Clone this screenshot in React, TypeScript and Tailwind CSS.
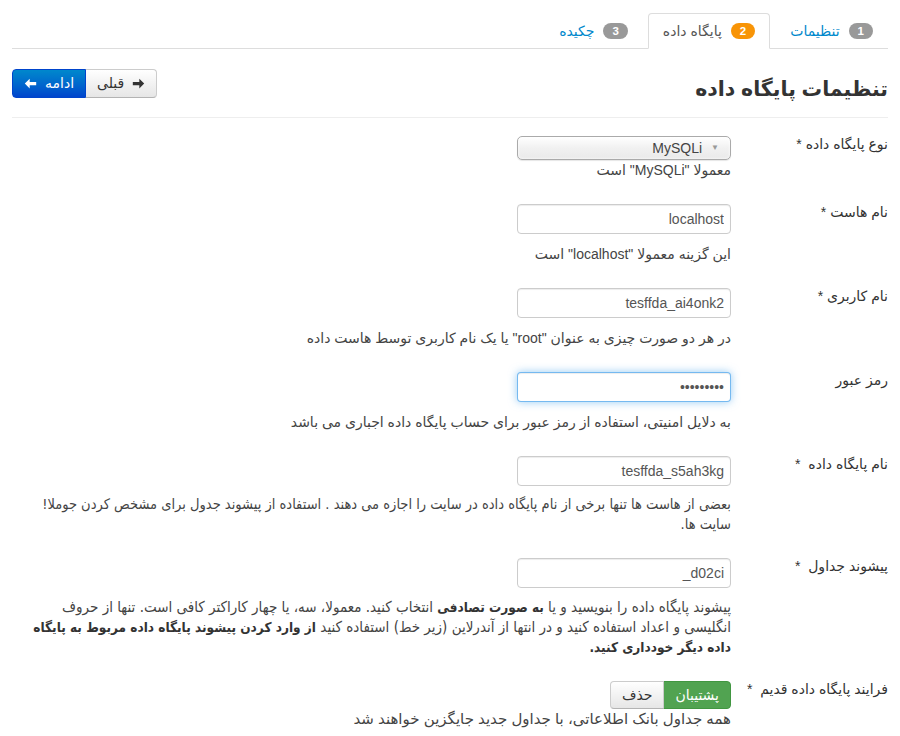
import type React from 'react'

const FONT = "font-['Liberation_Sans','DejaVu_Sans',sans-serif]"
const CONDENSED = "font-['DejaVu_Sans_Condensed','DejaVu_Sans',sans-serif]"

const ArrowRight = ({ className }: { className?: string }) => (
  <svg viewBox="0 0 16 16" className={className} fill="currentColor">
    <path d="M1 6h8V2l6 6-6 6v-4H1z" />
  </svg>
)

const ArrowLeft = ({ className }: { className?: string }) => (
  <svg viewBox="0 0 16 16" className={className} fill="currentColor">
    <path d="M15 6H7V2L1 8l6 6v-4h8z" />
  </svg>
)

type TabProps = { num: string; label: string; active?: boolean }

const Tab: React.FC<TabProps> = ({ num, label, active }) => (
  <li className="-mb-px ml-[5px]">
    <div
      className={`flex items-center gap-[9px] px-[14px] py-[7px] leading-5 rounded-t-[4px] border ${
        active ? 'bg-white border-[#ddd] border-b-transparent text-[#555]' : 'border-transparent text-[#08c]'
      }`}
    >
      <span
        className={`rounded-[9px] px-[9px] py-[1px] text-[11.5px] leading-[14px] font-bold text-white ${
          active ? 'bg-[#f89406]' : 'bg-[#999]'
        }`}
      >
        {num}
      </span>
      <span>{label}</span>
    </div>
  </li>
)

const TextInput = ({ value, focused, password }: { value: string; focused?: boolean; password?: boolean }) => (
  <input
    type={password ? 'password' : 'text'}
    dir="ltr"
    readOnly
    defaultValue={value}
    className={`block w-[214px] h-[30px] rounded-[4px] border bg-white px-[6px] text-right text-[14px] text-[#555] outline-none ${FONT} ${
      focused
        ? 'border-[rgba(82,168,236,0.8)] shadow-[inset_0_1px_1px_rgba(0,0,0,0.075),0_0_8px_rgba(82,168,236,0.6)]'
        : 'border-[#ccc] shadow-[inset_0_1px_1px_rgba(0,0,0,0.075)]'
    }`}
  />
)

type RowProps = {
  label: string
  children: React.ReactNode
  help: React.ReactNode
  helpClass?: string
}

const Row: React.FC<RowProps> = ({ label, children, help, helpClass = 'mt-[10px]' }) => (
  <div className="flex mb-6">
    <label className="w-[157px] shrink-0 -mt-[2px] leading-5 text-[#333] whitespace-pre">{label}</label>
    <div className="flex-1">
      {children}
      <p className={`leading-5 text-[#444] ${helpClass}`}>{help}</p>
    </div>
  </div>
)

export default function App() {
  return (
    <div dir="rtl" className={`w-[900px] min-h-[736px] bg-white px-3 pt-[13px] text-[14px] text-[#333] ${FONT}`}>
      {/* مراحل نصب */}
      <ul className="flex border-b border-[#ddd]">
        <Tab num="1" label="تنظیمات" />
        <Tab num="2" label="پایگاه داده" active />
        <Tab num="3" label="چکیده" />
      </ul>

      {/* عنوان و دکمه ها */}
      <div className="flex items-start justify-between mt-5">
        <h1 className="text-[20.5px] leading-[40px] font-bold text-[#333]">تنظیمات پایگاه داده</h1>
        <div className="flex">
          <button
            type="button"
            className="flex items-center gap-[8px] h-[29px] px-[11px] border border-[#ccc] border-b-[#b3b3b3] rounded-r-[4px] bg-gradient-to-b from-white to-[#e6e6e6] text-[#333]"
          >
            <ArrowRight className="w-[13px] h-[13px]" />
            <span>قبلی</span>
          </button>
          <button
            type="button"
            className="flex items-center gap-[8px] h-[29px] px-[11px] -mr-px border border-[#04c] rounded-l-[4px] bg-gradient-to-b from-[#08c] to-[#04c] text-white"
          >
            <span>ادامه</span>
            <ArrowLeft className="w-[13px] h-[13px]" />
          </button>
        </div>
      </div>
      <div className="mt-[8px] border-t border-[#eee] border-b border-b-white" />

      {/* فرم */}
      <div className="mt-[17px]">
        <Row label="نوع پایگاه داده *" help={'معمولا "MySQLi" است'} helpClass="">
          <div className="flex items-center gap-[9px] w-[214px] h-[24px] rounded-[5px] border border-[#aaa] bg-gradient-to-b from-white via-[#f1f1f1] to-[#eaeaea] shadow-[inset_0_0_3px_white,0_1px_1px_rgba(0,0,0,0.1)] pr-[11px] text-[14px] text-[#444]">
            <span className="text-[8px] text-[#999]">▼</span>
            <span>MySQLi</span>
          </div>
        </Row>
        <Row label="نام هاست *" help={'این گزینه معمولا "localhost" است'}>
          <TextInput value="localhost" />
        </Row>
        <Row label="نام کاربری *" help={'در هر دو صورت چیزی به عنوان "root" یا یک نام کاربری توسط هاست داده'}>
          <TextInput value="tesffda_ai4onk2" />
        </Row>
        <Row label="رمز عبور" help="به دلایل امنیتی، استفاده از رمز عبور برای حساب پایگاه داده اجباری می باشد">
          <TextInput value="123456789" focused password />
        </Row>
        <Row
          label="نام پایگاه داده  *"
          helpClass={`mt-[8px] text-[14.5px] ${CONDENSED}`}
          help="بعضی از هاست ها تنها برخی از نام پایگاه داده در سایت را اجازه می دهند . استفاده از پیشوند جدول برای مشخص کردن جوملا! سایت ها."
        >
          <TextInput value="tesffda_s5ah3kg" />
        </Row>
        <Row
          label="پیشوند جداول  *"
          helpClass={`mt-[9px] text-[15px] ${CONDENSED}`}
          help={
            <>
              پیشوند پایگاه داده را بنویسید و یا <b className="text-[#333] text-[13.5px]">به صورت تصادفی</b> انتخاب کنید. معمولا، سه، یا چهار
              کاراکتر کافی است. تنها از حروف انگلیسی و اعداد استفاده کنید و در انتها از آندرلاین (زیر خط) استفاده کنید{' '}
              <b className="text-[#333] text-[13.5px]">از وارد کردن پیشوند پایگاه داده مربوط به پایگاه داده دیگر خودداری کنید.</b>
            </>
          }
        >
          <TextInput value="_d02ci" />
        </Row>
        <Row
          label="فرایند پایگاه داده قدیم  *"
          help="همه جداول بانک اطلاعاتی، با جداول جدید جایگزین خواهند شد"
          helpClass="text-[15px]"
        >
          <div className="flex">
            <button
              type="button"
              className="h-[28px] px-[11px] rounded-r-[4px] border border-[#419641] bg-[#51a351] text-white"
            >
              پشتیبان
            </button>
            <button
              type="button"
              className="h-[28px] px-[11px] -mr-px rounded-l-[4px] border border-[#ccc] border-b-[#b3b3b3] bg-gradient-to-b from-white to-[#e6e6e6] text-[#333]"
            >
              حذف
            </button>
          </div>
        </Row>
      </div>
    </div>
  )
}
